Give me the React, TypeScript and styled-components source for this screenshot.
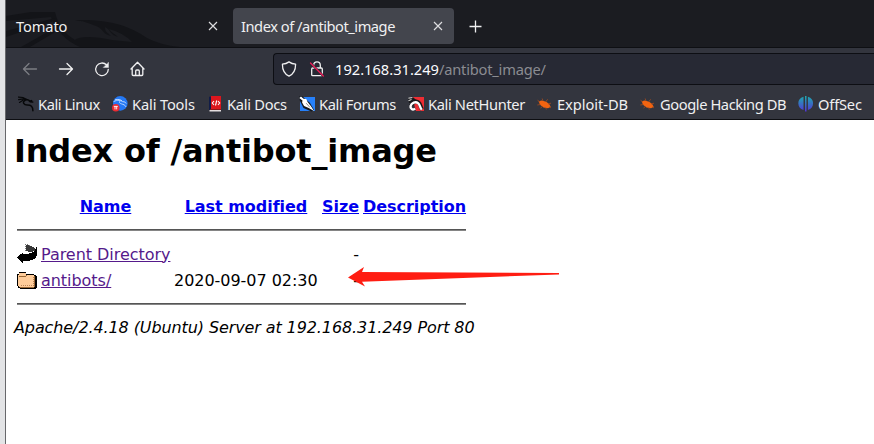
import React from 'react';
import styled, { createGlobalStyle } from 'styled-components';

const GlobalStyle = createGlobalStyle`
  * { box-sizing: border-box; }
  body { margin: 0; background: #fff; overflow: hidden; }
  svg { display: block; flex: none; }
`;

const Desktop = styled.div`
  display: flex;
  width: 874px;
  height: 444px;
  overflow: hidden;
  background: #e3e4e6;
  padding-left: 5px;
`;

const Window = styled.div`
  width: 869px;
  border-left: 1px solid #67686b;
  display: flex;
  flex-direction: column;
  background: #fff;
`;

const Chrome = styled.header`
  font-family: 'Noto Sans', sans-serif;
  color: #f0f0f1;
  background: #33353e;
  height: 120px;
  border-bottom: 1px solid #0d0e12;
`;

const TabStrip = styled.div`
  position: relative;
  display: flex;
  align-items: flex-start;
  height: 48px;
  padding-top: 8px;
  background: #1b1c21;
  border-bottom: 1px solid #0e0f13;
`;

const DragonArt = styled.svg`
  position: absolute;
  left: 0;
  top: 0;
`;

const Tab = styled.div<{ $active?: boolean }>`
  position: relative;
  display: flex;
  align-items: center;
  justify-content: space-between;
  width: ${p => (p.$active ? 221 : 219)}px;
  height: 36px;
  margin-left: ${p => (p.$active ? 8 : 0)}px;
  padding: 0 ${p => (p.$active ? 11 : 7)}px 0 ${p => (p.$active ? 8 : 10)}px;
  border-radius: 4px;
  background: ${p => (p.$active ? '#43454d' : 'transparent')};
`;

const TabLabel = styled.span<{ $spacing: number }>`
  font-size: 14.67px;
  line-height: 20px;
  letter-spacing: ${p => p.$spacing}px;
  white-space: nowrap;
`;

const NewTab = styled.div`
  display: flex;
  align-items: center;
  height: 36px;
  margin-left: 15px;
`;

const NavBar = styled.div`
  display: flex;
  align-items: center;
  height: 41px;
  padding-left: 16px;
`;

const NavButtons = styled.div`
  display: flex;
  gap: 20px;
  width: 251px;
`;

const AddressBar = styled.div`
  display: flex;
  align-items: center;
  flex: 1;
  height: 32px;
  padding-left: 7px;
  border: 1px solid #0d0e13;
  border-right: 0;
  border-radius: 4px 0 0 4px;
  background: #272934;
`;

const LockSlot = styled.div`
  margin: 0 10px 0 12px;
`;

const Url = styled.span`
  font-size: 14.67px;
  line-height: 20px;
  letter-spacing: -0.21px;
  white-space: nowrap;
  color: #8b8c92;
`;

const Host = styled.span`
  color: #fbfbfe;
  letter-spacing: 0;
`;

const Bookmarks = styled.nav`
  display: flex;
  align-items: center;
  height: 29px;
  padding-left: 12px;
`;

const Bookmark = styled.div<{ $w: number; $gap: number; $spacing: number }>`
  display: flex;
  align-items: center;
  flex: none;
  gap: ${p => p.$gap}px;
  width: ${p => p.$w}px;
  height: 22px;
  font-size: 14.67px;
  line-height: 20px;
  letter-spacing: ${p => p.$spacing}px;
  white-space: nowrap;
`;

const Page = styled.main`
  position: relative;
  flex: 1;
  padding: 12px 8px 0;
  font: 16px/19px 'DejaVu Sans', sans-serif;
  color: #000;
`;

const Title = styled.h1`
  margin: 0 0 27px;
  font-size: 32px;
  line-height: 38px;
  letter-spacing: -0.19px;
  font-weight: bold;
  white-space: nowrap;
`;

const Listing = styled.div`
  width: 449px;
  margin-left: 3px;
  letter-spacing: -0.04px;
`;

const Row = styled.div<{ $head?: boolean }>`
  display: grid;
  grid-template-columns: 20px 129px 144px 37px 103px;
  column-gap: 4px;
  align-items: center;
  height: ${p => (p.$head ? 19 : 26)}px;
  font-weight: ${p => (p.$head ? 'bold' : 'normal')};
  text-align: ${p => (p.$head ? 'center' : 'left')};
  white-space: nowrap;
`;

const Link = styled.a<{ $visited?: boolean }>`
  color: ${p => (p.$visited ? '#551a8b' : '#0000ee')};
  text-decoration: underline;
`;

const Right = styled.span`
  text-align: right;
`;

const Rule = styled.hr<{ $top: number; $bottom: number }>`
  height: 2px;
  border: 0;
  border-top: 1px solid #555;
  background: #858585;
  margin: ${p => p.$top}px 0 ${p => p.$bottom}px;
`;

const Address = styled.address`
  font-style: italic;
  letter-spacing: -0.1px;
  white-space: nowrap;
`;

const Arrow = styled.svg`
  position: absolute;
  left: 340px;
  top: 144px;
`;

const Close = () => (
  <svg width="10" height="10" viewBox="0 0 10 10" stroke="#dedee0" strokeWidth="1.15">
    <path d="M1 1 9 9M9 1 1 9" />
  </svg>
);

const stroke = { fill: 'none', stroke: '#f0f0f1', strokeWidth: 1.3, strokeLinecap: 'round' as const, strokeLinejoin: 'round' as const };

const BackIcon = () => (
  <svg width="16" height="16" viewBox="0 0 16 16" {...stroke} stroke="#7c7d83">
    <path d="M14.5 8H1.7M7 2.5 1.5 8 7 13.5" />
  </svg>
);
const ForwardIcon = () => (
  <svg width="16" height="16" viewBox="0 0 16 16" {...stroke}>
    <path d="M1.5 8h12.8M9 2.5 14.5 8 9 13.5" />
  </svg>
);
const ReloadIcon = () => (
  <svg width="16" height="16" viewBox="0 0 16 16" {...stroke}>
    <path d="M12.6 4A6.3 6.3 0 1 0 14.3 8.3" />
    <path d="M14.5 1.5v5h-5z" fill="#f0f0f1" strokeWidth="0.4" />
  </svg>
);
const HomeIcon = () => (
  <svg width="16" height="16" viewBox="0 0 16 16" {...stroke}>
    <path d="M1 8 7.5 1.2 14 8M2.2 7v6.5q0 1 1 1h8.6q1 0 1-1V7M5.7 14V10q0-1 1-1h1.6q1 0 1 1v4" />
  </svg>
);
const ShieldIcon = () => (
  <svg width="16" height="16" viewBox="0 0 16 16" {...stroke}>
    <path d="M8 .9C5.7 2.5 3.8 3 1.4 3.2c0 5.6 1.5 9.6 6.6 11.9 5.1-2.3 6.6-6.3 6.6-11.9C12.2 3 10.3 2.5 8 .9Z" />
  </svg>
);
const LockIcon = () => (
  <svg width="16" height="16" viewBox="0 0 16 16" {...stroke}>
    <path d="M4.7 7V4.2a3.3 3.3 0 0 1 6.6 0V7M3.7 7h8.6q1 0 1 1v5.7q0 1-1 1H3.7q-1 0-1-1V8q0-1 1-1Z" />
    <path d="m1.5 2 12.8 13" stroke="#272934" strokeWidth="2.4" />
    <path d="m1.5 2 12.8 13" stroke="#ed1c57" strokeWidth="1.3" />
  </svg>
);

const KaliIcon = () => (
  <svg width="16" height="16" viewBox="0 0 16 16" fill="none" stroke="#07080a" strokeLinecap="round">
    <path d="M.4 1.1 5 1.5l3.8 2M.6 3.7l4.5-.8 3 .9M1.5 6.4 5 4.2" strokeWidth="1.2" />
    <path d="M7.4 4c-4 2.4-1.1 5 1.7 5 4.1-.1 5.7 1.4 5.8 5.8" strokeWidth="1.5" />
    <path d="M7.7 3.5c2.5.2 3.8.8 4.5 2.2l2.5.4M11.4 5.3l2.2-.7" strokeWidth="1.5" />
  </svg>
);
const ToolsIcon = () => (
  <svg width="16" height="16" viewBox="0 0 16 16">
    <circle cx="8.3" cy="7.4" r="7.3" fill="#2478f4" />
    <path d="M1.6 5.6c4-2 7-1.3 9.1.1 2 0 2.9.6 3.5 1.8M3 3.8c3-.8 5.5-.2 7 1M7.8 5.2C6 8.8 12.4 7 14 10.9" fill="none" stroke="#b8d6ff" strokeWidth="1" />
    <circle cx="3.8" cy="11.8" r="3.8" fill="#ec2c32" />
    <path d="M1.8 10.4h4M3 10.4v3M4.7 10.4v3" stroke="#fff" strokeWidth=".9" />
  </svg>
);
const DocsIcon = () => (
  <svg width="14" height="16" viewBox="0 0 14 16">
    <path d="M1 0h11v14H1z" fill="#dc161d" />
    <path d="M0 1 2 0v14H0z" fill="#111d48" />
    <path d="M1 13h11v1H1z" fill="#8d151b" />
    <path d="M.5 14h11.5v1.5H.5z" fill="#e5dfe0" />
    <path d="M5 5 3.3 7 5 9M7.7 4.5 6.5 9.5M9 5l1.7 2L9 9" fill="none" stroke="#fff" strokeWidth="1.1" />
  </svg>
);
const ForumsIcon = () => (
  <svg width="16" height="16" viewBox="0 0 16 16">
    <path d="M1 1h15v14H1z" fill="#2680fa" />
    <path d="M0 .5 3 0l8 7 4 7-2.5 1.5-8-3.5L1 5z" fill="#13171d" />
    <path d="M.3 2 2 .4l2.5 2.4L7.3 3l1.3 3 3.2 4 3.3 5-5.4-3-4.6-2-2-3.4.4-2.2z" fill="#fff" />
    <path d="m7.2 7.2 3.7 4.2" stroke="#6a6c70" strokeWidth=".8" />
  </svg>
);
const HunterIcon = () => (
  <svg width="16" height="16" viewBox="0 0 16 16">
    <path d="M4 1h12v14H8z" fill="#ee2d33" />
    <path d="M0 2.2 4 .5l5 4-5 2-3 .5z" fill="#17181b" />
    <path d="M.4 2.2 4.4 1.6M.5 4.6l3-1" stroke="#e9e9e9" strokeWidth="1" />
    <path d="M3.2 9.6C4.4 5.8 8.2 4.5 10.6 6.6c2.2 2 1.6 4.4 3.6 6.9" fill="none" stroke="#17181b" strokeWidth="4" />
    <path d="M7.2 12.6C4.6 14.6 2 12.7 2.6 10 3.4 6.8 7.6 5.2 10 7.2c2.3 1.9 1.6 4.2 3.8 6.6" fill="none" stroke="#fff" strokeWidth="2.4" />
  </svg>
);
const BugIcon = () => (
  <svg width="15" height="14" viewBox="0 0 15 14">
    <path d="M1.6 4.3 4.7 3.4l4.5 1.4 2.9 2.1 1.6 2.8-2.6 1.5-4.6-.7L3 7.8Z" fill="#f26411" />
    <path d="M3 5 .5 3.2M3.5 7.5.3 8M6 4 5.2 1.5M8.8 4.8l1.8-2.5M11 7l3-.8M12 10l2 .8M8.8 10.5l.5 2M5.7 9.4 3.5 11" stroke="#a54b1d" strokeWidth=".8" />
  </svg>
);
const OffSecIcon = () => (
  <svg width="16" height="16" viewBox="0 0 16 16" fill="url(#off)">
    <defs><linearGradient id="off" x1="0" y1="0" x2="0" y2="16" gradientUnits="userSpaceOnUse"><stop stopColor="#1cacae" /><stop offset="1" stopColor="#5530d9" /></linearGradient></defs>
    <path d="M5.5.8v13.3C-1.4 12.3-1.4 2.2 5.5.8ZM9.9.8v13.3c6.9-1.8 6.9-11.9 0-13.3Z" />
    <path d="M7 0h1.5v15.5H7z" />
  </svg>
);

const ParentIcon = () => (
  <svg width="20" height="22" viewBox="0 0 20 22" shapeRendering="crispEdges">
    <path d="M9 2h4v1h2v1h2v1h1v3h-2v1h-5V8H9z" fill="#383838" />
    <path d="M8 1h1v1H8zM10 1h1v1h-1zM8 3h1v1H8zM12 2h1v1h-1zM8 5h1v1H8zM8 7h1v1H8z" fill="#777" />
    <path d="M19 4h1v9h-1v2h-1v1h-2v1h-3v1H6v2H5v-1H4v-1H3v-1H2v-1H1v-1H0v-1h1v-1h1v-1h1v-1h2v-1h1v1h6v-1h3v-1h2V8h1V6h1z" fill="#000" />
  </svg>
);
const FolderIcon = () => (
  <svg width="20" height="22" viewBox="0 0 20 22" shapeRendering="crispEdges">
    <path d="M2 3h7v2h8v1h2v1h1v12h-1v1H3v-1H1v-2H0V5h2z" fill="#000" />
    <path d="M1 6h1V4h7v2h8v12H2v-1H1z" fill="#ffcc99" />
    <path d="M17 7h1v11h-1zM3 18h14v1H3z" fill="#996633" />
    <path d="M2 7h7v1H2zM9 6h1v1H9z" fill="#996633" />
    <path d="M4 16.5h13M16.5 8v9" fill="none" stroke="#bb8558" strokeDasharray="1 1" />
  </svg>
);

const bookmarks = [
  { label: 'Kali Linux', w: 94, gap: 4, spacing: -0.42, icon: <KaliIcon /> },
  { label: 'Kali Tools', w: 97, gap: 4, spacing: -0.15, icon: <ToolsIcon /> },
  { label: 'Kali Docs', w: 90, gap: 4, spacing: -0.28, icon: <DocsIcon /> },
  { label: 'Kali Forums', w: 109, gap: 4, spacing: -0.36, icon: <ForumsIcon /> },
  { label: 'Kali NetHunter', w: 129, gap: 4, spacing: -0.36, icon: <HunterIcon /> },
  { label: 'Exploit-DB', w: 103, gap: 5, spacing: -0.06, icon: <BugIcon /> },
  { label: 'Google Hacking DB', w: 158, gap: 5, spacing: -0.41, icon: <BugIcon /> },
  { label: 'OffSec', w: 70, gap: 4, spacing: -0.18, icon: <OffSecIcon /> },
];

export default function App() {
  return (
    <Desktop>
      <GlobalStyle />
      <Window>
        <Chrome>
          <TabStrip>
            <DragonArt width="180" height="47" viewBox="0 0 180 47" fill="#131418">
              <path d="M0 16 25 12h24c3 13 10 22 20 28 4-4 19-4 37 0l20 2q-8-9-23-13c5 6 5 4 9 8-8-2-7-7-13-10 0 5 2 5 6 9-9-2-8-8-15-10-19-7-10-3-21-6 35-1 55 6 72 18q13 7 33 9H74Q53 38 45 17L0 21Z" />
              <path d="m0 31 49-13 2 2L0 37ZM15 47l39-22 2 3-32 19Z" />
            </DragonArt>
            <Tab><TabLabel $spacing={-0.12}>Tomato</TabLabel><Close /></Tab>
            <Tab $active><TabLabel $spacing={-0.47}>Index of /antibot_image</TabLabel><Close /></Tab>
            <NewTab>
              <svg width="13" height="13" viewBox="0 0 13 13" stroke="#f0f0f1" strokeWidth="1.3"><path d="M6.5.5v12M.5 6.5h12" /></svg>
            </NewTab>
          </TabStrip>
          <NavBar>
            <NavButtons><BackIcon /><ForwardIcon /><ReloadIcon /><HomeIcon /></NavButtons>
            <AddressBar>
              <ShieldIcon />
              <LockSlot><LockIcon /></LockSlot>
              <Url><Host>192.168.31.249</Host>/antibot_image/</Url>
            </AddressBar>
          </NavBar>
          <Bookmarks>
            {bookmarks.map(b => <Bookmark key={b.label} $w={b.w} $gap={b.gap} $spacing={b.spacing}>{b.icon}<span>{b.label}</span></Bookmark>)}
          </Bookmarks>
        </Chrome>
        <Page>
          <Title>Index of /antibot_image</Title>
          <Listing>
            <Row $head>
              <span />
              <Link>Name</Link><Link>Last modified</Link><Link>Size</Link><Link>Description</Link>
            </Row>
            <Rule $top={13} $bottom={10} />
            <Row><ParentIcon /><Link $visited>Parent Directory</Link><span /><Right>-</Right><span /></Row>
            <Row><FolderIcon /><Link $visited>antibots/</Link><span>2020-09-07 02:30</span><Right>-</Right><span /></Row>
            <Rule $top={10} $bottom={13} />
          </Listing>
          <Address>Apache/2.4.18 (Ubuntu) Server at 192.168.31.249 Port 80</Address>
          <Arrow width="216" height="26" viewBox="0 0 216 26" fill="#ff1d12">
            <path d="m2 13.5 16-10.5-2 5 197 1-0 1.4L16 17.8l3 4.7Z" />
          </Arrow>
        </Page>
      </Window>
    </Desktop>
  );
}
